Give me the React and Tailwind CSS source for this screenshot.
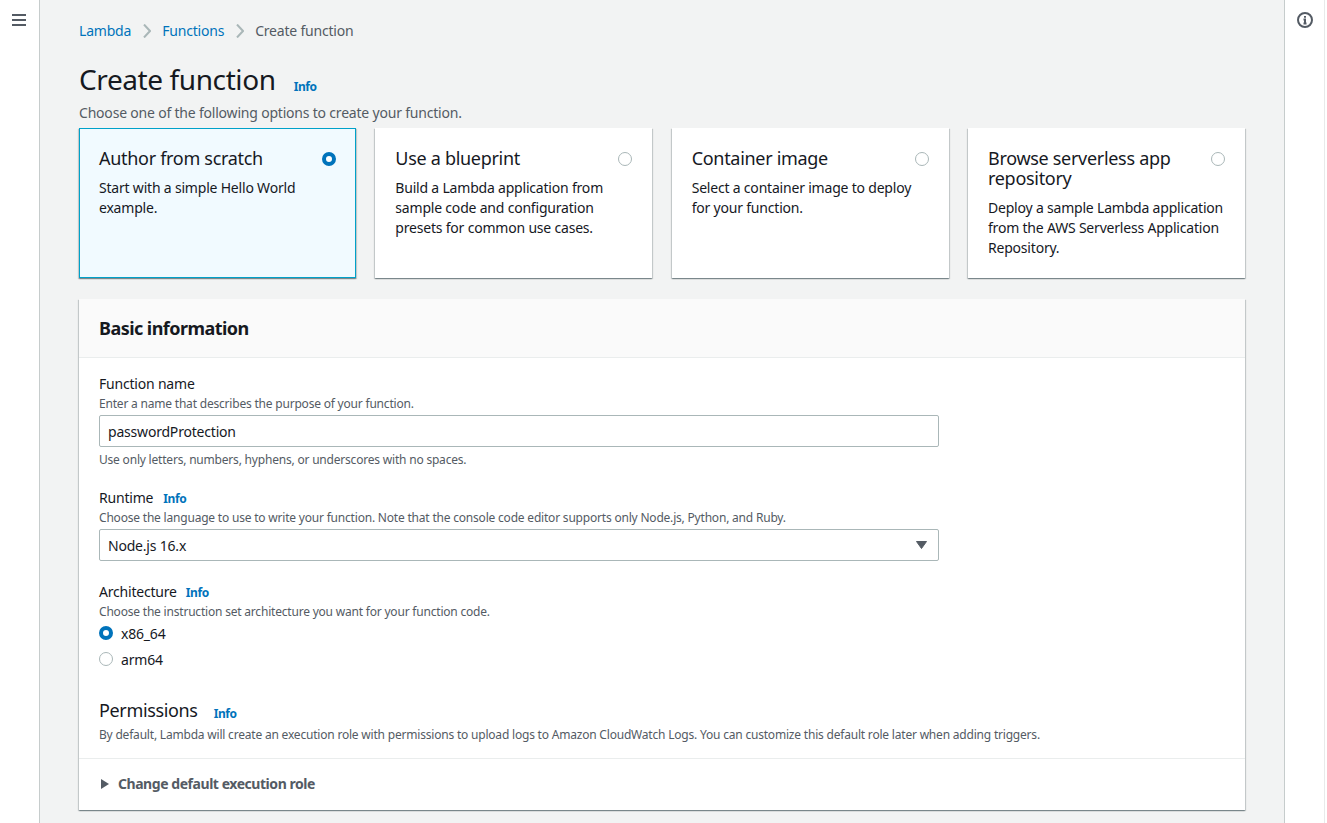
const OPTIONS = [
  { title: "Author from scratch", text: "Start with a simple Hello World example.", selected: true },
  { title: "Use a blueprint", text: "Build a Lambda application from sample code and configuration presets for common use cases." },
  { title: "Container image", text: "Select a container image to deploy for your function." },
  { title: "Browse serverless app repository", text: "Deploy a sample Lambda application from the AWS Serverless Application Repository." },
];

function Radio({ checked }) {
  return checked ? (
    <span className="block w-[14px] h-[14px] shrink-0 rounded-full border-[4px] border-[#0073bb] bg-white" />
  ) : (
    <span className="block w-[14px] h-[14px] shrink-0 rounded-full border border-[#aab7b8] bg-white" />
  );
}

function Info({ className = "" }) {
  return <a className={`text-[12px] leading-[16px] font-bold tracking-[-0.4px] text-[#0073bb] ${className}`}>Info</a>;
}

function Chevron() {
  return (
    <svg width="8" height="14" viewBox="0 0 8 14" fill="none" stroke="#aab7b8" strokeWidth="2" className="mx-[11.5px]">
      <path d="M1 0.5L7 7l-6 6.5" />
    </svg>
  );
}

function OptionCard({ title, text, selected }) {
  return (
    <div
      className={`h-[150px] shadow-[0_1px_1px_0_rgba(0,28,36,0.3),1px_1px_1px_0_rgba(0,28,36,0.15),-1px_1px_1px_0_rgba(0,28,36,0.15)] ${
        selected ? "bg-[#f1faff] border border-[#00a1c9] p-[19px]" : "bg-white p-[20px]"
      }`}
    >
      <div className="flex justify-between items-start">
        <div className="text-[18px] leading-[20px] tracking-[-0.3px] text-[#16191f] w-[200px]">{title}</div>
        <span className="mt-[4px]">
          <Radio checked={selected} />
        </span>
      </div>
      <p className="mt-[10px] text-[14px] leading-[20px] text-[#16191f] w-[236px]">{text}</p>
    </div>
  );
}

export default function App() {
  return (
    <div className="font-['Noto_Sans',sans-serif] tracking-[-0.2px] flex h-[823px] overflow-hidden bg-white text-[#16191f]">
      <aside className="w-[40px] shrink-0 bg-white border-r border-[#c6cccc] pt-[13px] pl-[12px] shadow-[1px_0_1px_rgba(0,28,36,0.1)]">
        <svg width="14" height="14" viewBox="0 0 14 14" stroke="#545b64" strokeWidth="2">
          <path d="M0 2h14M0 7h14M0 12h14" />
        </svg>
      </aside>

      <main className="flex-1 bg-[#f2f3f3] px-[39px]">
        <nav className="flex items-center pt-[21px] text-[14px] leading-[20px]">
          <a className="text-[#0073bb]">Lambda</a>
          <Chevron />
          <a className="text-[#0073bb]">Functions</a>
          <Chevron />
          <span className="text-[#545b64]">Create function</span>
        </nav>

        <div className="flex items-end mt-[20px]">
          <h1 className="text-[28px] leading-[36px] font-normal tracking-[-0.4px] text-[#16191f]">Create function</h1>
          <Info className="ml-[18px] mb-[2px]" />
        </div>
        <p className="mt-[6px] text-[14px] leading-[20px] text-[#545b64]">Choose one of the following options to create your function.</p>

        <div className="grid grid-cols-4 gap-[19.33px] mt-[5px]">
          {OPTIONS.map((o) => (
            <OptionCard key={o.title} {...o} />
          ))}
        </div>

        <section className="mt-[21px] h-[511px] bg-white shadow-[0_1px_1px_0_rgba(0,28,36,0.3),1px_1px_1px_0_rgba(0,28,36,0.15),-1px_1px_1px_0_rgba(0,28,36,0.15)]">
          <header className="h-[59px] bg-[#fafafa] border-b border-[#eaeded] pl-[20px] pt-[18px]">
            <h2 className="text-[18px] leading-[22px] font-bold tracking-[-0.55px]">Basic information</h2>
          </header>

          <div className="pl-[20px] pt-[16px]">
            <div className="text-[14px] leading-[20px]">Function name</div>
            <div className="text-[12px] leading-[16px] text-[#545b64] mt-[2px]">Enter a name that describes the purpose of your function.</div>
            <input
              readOnly
              value="passwordProtection"
              className="block mt-[3px] w-[840px] h-[32px] px-[8px] bg-white border border-[#aab7b8] rounded-[2px] text-[14px] text-[#16191f] outline-none"
            />
            <div className="text-[12px] leading-[16px] text-[#545b64] mt-[5px]">Use only letters, numbers, hyphens, or underscores with no spaces.</div>

            <div className="flex items-center mt-[20px] text-[14px] leading-[20px]">
              Runtime <Info className="ml-[10px] mt-[1px]" />
            </div>
            <div className="text-[12px] leading-[16px] text-[#545b64] mt-[2px]">Choose the language to use to write your function. Note that the console code editor supports only Node.js, Python, and Ruby.</div>
            <div className="flex items-center justify-between mt-[3px] w-[840px] h-[32px] px-[8px] pr-[11px] bg-white border border-[#aab7b8] rounded-[2px] text-[14px]">
              <span>Node.js 16.x</span>
              <svg width="11" height="8" viewBox="0 0 11 8"><path d="M0.5 0.5h10L5.5 7.5z" fill="#545b64" stroke="#545b64" strokeLinejoin="round" /></svg>
            </div>

            <div className="flex items-center mt-[21px] text-[14px] leading-[20px]">
              Architecture <Info className="ml-[9px] mt-[2px]" />
            </div>
            <div className="text-[12px] leading-[16px] text-[#545b64] mt-[2px]">Choose the instruction set architecture you want for your function code.</div>
            <label className="flex items-center gap-[8px] h-[26px] text-[14px]">
              <Radio checked /> x86_64
            </label>
            <label className="flex items-center gap-[8px] h-[26px] text-[14px]">
              <Radio /> arm64
            </label>

            <div className="flex items-end mt-[26px]">
              <h3 className="text-[18px] leading-[24px] font-normal tracking-[-0.35px]">Permissions</h3>
              <Info className="ml-[16px]" />
            </div>
            <p className="text-[12px] leading-[16px] text-[#545b64] mt-[5px]">By default, Lambda will create an execution role with permissions to upload logs to Amazon CloudWatch Logs. You can customize this default role later when adding triggers.</p>
          </div>

          <div className="mt-[15px] border-t border-[#eaeded] pl-[22px] pt-[15px] flex items-center gap-[9px] text-[14px] leading-[20px] font-bold tracking-[-0.45px] text-[#545b64]">
            <svg width="8" height="10" viewBox="0 0 8 10"><path d="M0 0l8 5-8 5z" fill="#545b64" /></svg>
            Change default execution role
          </div>
        </section>
      </main>

      <aside className="w-[41px] shrink-0 bg-white border-l border-r border-[#c6cccc] border-r-[#e8eaea] pt-[12px] pl-[12px] mr-[2px]">
        <svg width="16" height="16" viewBox="0 0 16 16" fill="none" stroke="#545b64" strokeWidth="2">
          <circle cx="8" cy="8" r="7" />
          <path d="M6.5 7.5H8v4M6.5 11.5h3M8 4v1.8" />
        </svg>
      </aside>
    </div>
  );
}
